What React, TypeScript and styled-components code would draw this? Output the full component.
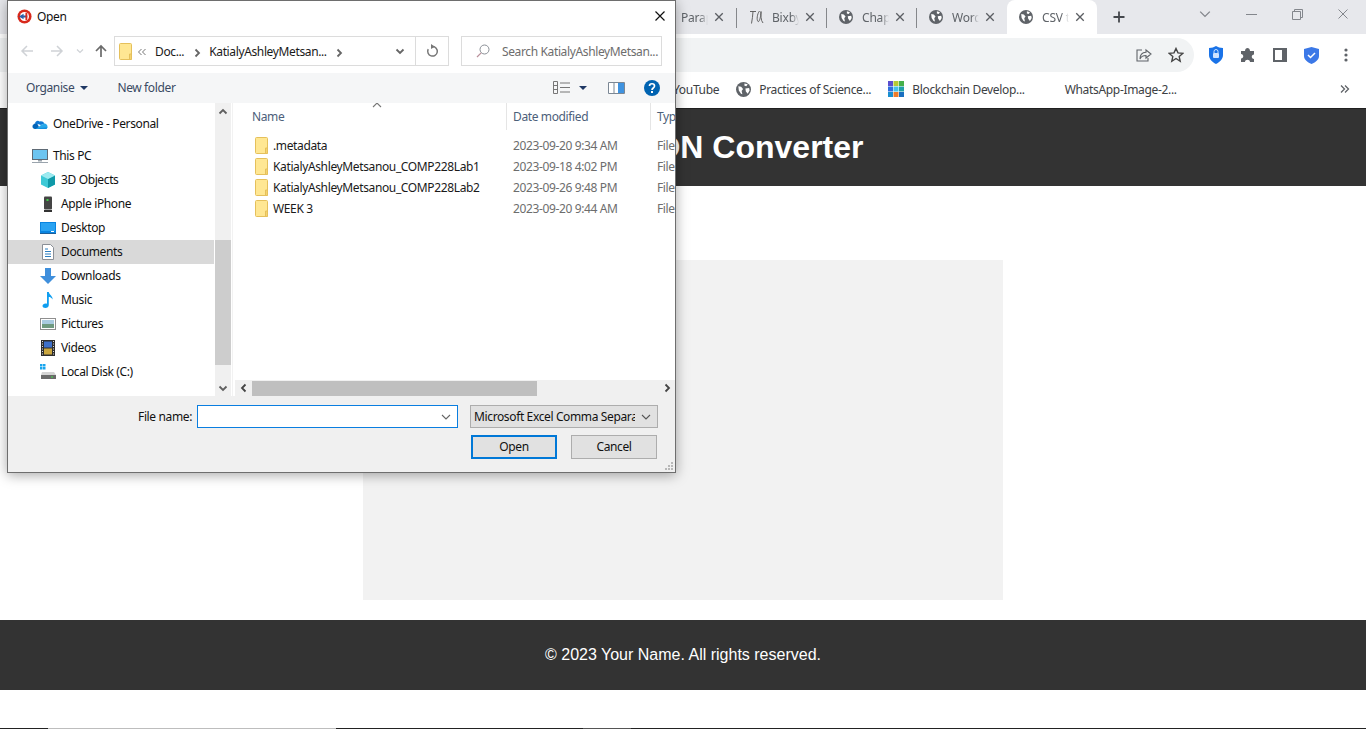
import React from "react";
import styled, { createGlobalStyle } from "styled-components";

const GlobalStyle = createGlobalStyle`
  html, body {
    margin: 0;
    padding: 0;
    height: 729px;
    overflow: hidden;
    background: #fff;
  }
  * { box-sizing: border-box; }
`;

const uiFont = `"Noto Sans", "Open Sans", sans-serif`;

const Page = styled.div`
  position: relative;
  width: 1366px;
  height: 729px;
  overflow: hidden;
  display: flex;
  flex-direction: column;
  font-family: "Liberation Sans", Arial, sans-serif;
`;

/* browser chrome */
const TabStrip = styled.div`
  height: 34px;
  flex: none;
  background: #e7e8ec;
  display: flex;
  align-items: center;
  padding-left: 647px;
  font: 12px ${uiFont};
  letter-spacing: -0.2px;
  color: #5f6368;
`;

const Tab = styled.div<{ $active?: boolean; $noIcon?: boolean }>`
  width: 90px;
  height: 34px;
  flex: none;
  display: flex;
  align-items: center;
  padding-left: ${(p) => (p.$noIcon ? "34px" : "12px")};
  position: relative;
  background: ${(p) => (p.$active ? "#fff" : "transparent")};
  border-radius: ${(p) => (p.$active ? "8px 8px 0 0" : "0")};
  &::after {
    content: "";
    display: ${(p) => (p.$active ? "none" : "block")};
    position: absolute;
    right: 0;
    top: 8px;
    height: 20px;
    width: 1px;
    background: #85878b;
  }
`;

const LastTab = styled(Tab)`
  &::after { display: none; }
`;

const TabLabel = styled.span<{ $gap?: number }>`
  width: 27px;
  margin-left: ${(p) => p.$gap ?? 9}px;
  overflow: hidden;
  white-space: nowrap;
  -webkit-mask-image: linear-gradient(to right, #000 70%, transparent);
  mask-image: linear-gradient(to right, #000 70%, transparent);
`;

const TabClose = styled.span`
  display: flex;
  margin-left: 6px;
  color: #5a5d62;
`;

const NewTab = styled.span`
  display: flex;
  margin-left: 15px;
  color: #45484d;
`;

const WindowControls = styled.div`
  margin-left: auto;
  display: flex;
  align-items: center;
  height: 28px;
  color: #83868c;
  margin-top: -6px;
`;

const WindowButton = styled.span`
  width: 46px;
  display: flex;
  justify-content: center;
`;

const Toolbar = styled.div`
  height: 38px;
  flex: none;
  background: #fff;
  display: flex;
  align-items: flex-end;
`;

const Omnibox = styled.div`
  width: 1194px;
  height: 34px;
  background: #f1f3f4;
  border-radius: 0 17px 17px 0;
  display: flex;
  align-items: center;
  justify-content: flex-end;
  gap: 16px;
  padding-right: 10px;
  color: #5f6368;
`;

const ToolIcons = styled.div`
  flex: 1;
  height: 34px;
  display: flex;
  align-items: center;
  padding-left: 13px;
  gap: 12px;
  color: #5f6368;
`;

const BookmarkBar = styled.div`
  height: 36px;
  flex: none;
  background: #fff;
  display: flex;
  align-items: center;
  font: 12px ${uiFont};
  letter-spacing: -0.33px;
  color: #3c4043;
  padding: 0 0 2px 673px;
`;

const Bookmark = styled.span<{ $gap: number }>`
  display: flex;
  align-items: center;
  gap: 8px;
  white-space: nowrap;
  margin-left: ${(p) => p.$gap}px;
`;

const More = styled.span`
  margin-left: auto;
  margin-right: 16px;
  display: flex;
  color: #5f6368;
`;

/* page content behind the dialog */
const SiteHeader = styled.header`
  height: 78px;
  flex: none;
  background: #333;
  border-top: 1px solid #202020;
  display: flex;
  align-items: center;
  justify-content: center;
  color: #fff;
`;

const SiteTitle = styled.h1`
  margin: 0;
  font-size: 32px;
  font-weight: 700;
`;

const Main = styled.main`
  height: 434px;
  flex: none;
  padding-top: 74px;
  background: #fff;
`;

const Panel = styled.section`
  width: 640px;
  height: 340px;
  margin: 0 auto;
  background: #f2f2f2;
`;

const SiteFooter = styled.footer`
  height: 70px;
  flex: none;
  background: #333;
  color: #fff;
  font-size: 16px;
  display: flex;
  align-items: center;
  justify-content: center;
`;

const Gap = styled.div`
  flex: 1;
  background: #fff;
`;

const BottomEdge = styled.div`
  height: 1px;
  flex: none;
  display: flex;
  background: #222;
`;

const EdgePiece = styled.div<{ $w: number; $c: string }>`
  width: ${(p) => p.$w}px;
  background: ${(p) => p.$c};
`;

/* file dialog */
const Dialog = styled.div`
  position: absolute;
  left: 7px;
  top: 0;
  width: 669px;
  height: 473px;
  background: #fff;
  border: 1px solid #6e6e6e;
  box-shadow: 0 2px 12px rgba(0, 0, 0, 0.35);
  display: flex;
  flex-direction: column;
  font: 12px ${uiFont};
  letter-spacing: -0.37px;
  color: #1a1a1a;
`;

const TitleBar = styled.div`
  height: 32px;
  flex: none;
  display: flex;
  align-items: center;
  padding: 0 9px 2px;
  gap: 5px;
  color: #111;
`;

const CloseX = styled.span`
  margin-left: auto;
  display: flex;
  color: #111;
`;

const AddressRow = styled.div`
  height: 40px;
  flex: none;
  display: flex;
  align-items: flex-start;
  padding-top: 3px;
`;

const NavButtons = styled.div`
  width: 106px;
  height: 30px;
  flex: none;
  display: flex;
  align-items: center;
  padding-left: 12px;
`;

const NavArrow = styled.span<{ $w: number }>`
  width: ${(p) => p.$w}px;
  flex: none;
  display: flex;
`;

const AddressBox = styled.div`
  width: 335px;
  height: 30px;
  flex: none;
  border: 1px solid #dcdcdc;
  display: flex;
  align-items: center;
  padding-left: 4px;
`;

const Crumb = styled.span<{ $gap: number }>`
  margin-left: ${(p) => p.$gap}px;
  display: flex;
  white-space: nowrap;
`;

const CrumbArrow = styled.span`
  display: flex;
  color: #666;
  margin-top: 4px;
`;

const AddressDrop = styled.span`
  margin-left: auto;
  width: 30px;
  height: 28px;
  display: flex;
  align-items: center;
  justify-content: center;
  color: #666;
`;

const Refresh = styled.span`
  width: 33px;
  height: 28px;
  border-left: 1px solid #dcdcdc;
  display: flex;
  align-items: center;
  justify-content: center;
  color: #777;
`;

const SearchBox = styled.div`
  width: 201px;
  height: 30px;
  margin-left: 12px;
  border: 1px solid #dcdcdc;
  display: flex;
  align-items: center;
  padding-left: 14px;
  gap: 12px;
  color: #6d6d6d;
  white-space: nowrap;
`;

const CommandBar = styled.div`
  height: 30px;
  flex: none;
  background: #f5f6f7;
  display: flex;
  align-items: center;
  padding: 0 0 1px 18px;
  color: #3a4a63;
`;

const Command = styled.span<{ $gap: number }>`
  margin-left: ${(p) => p.$gap}px;
  display: flex;
  align-items: center;
  gap: 6px;
`;

const CommandRight = styled.div`
  margin-left: auto;
  display: flex;
  align-items: center;
  padding-right: 15px;
`;

const ViewCaret = styled.span`
  display: flex;
  margin-left: 9px;
`;

const Body = styled.div`
  height: 293px;
  flex: none;
  display: flex;
  background: #fff;
`;

const NavPane = styled.div`
  width: 206px;
  flex: none;
  padding-top: 9px;
`;

const NavRow = styled.div<{ $depth: number; $selected?: boolean; $spaced?: boolean }>`
  height: 24px;
  display: flex;
  align-items: center;
  gap: 5px;
  padding-left: ${(p) => (p.$depth ? 32 : 24)}px;
  margin-top: ${(p) => (p.$spaced ? 8 : 0)}px;
  background: ${(p) => (p.$selected ? "#d9d9d9" : "transparent")};
  color: #111;
  white-space: nowrap;
`;

const NavText = styled.span`
  position: relative;
  top: -1px;
`;

const VScroll = styled.div`
  width: 16px;
  flex: none;
  margin-left: 1px;
  background: #f0f0f0;
  display: flex;
  flex-direction: column;
  color: #5f5f5f;
`;

const ScrollEnd = styled.span`
  height: 17px;
  display: flex;
  align-items: center;
  justify-content: center;
`;

const VTrack = styled.div`
  flex: 1;
  padding-top: 120px;
  padding-bottom: 14px;
`;

const VThumb = styled.div`
  height: 100%;
  background: #cdcdcd;
`;

const FilePane = styled.div`
  flex: 1;
  min-width: 0;
  margin-left: 1px;
  display: flex;
  flex-direction: column;
  overflow: hidden;
  border-left: 1px solid #f2f2f2;
`;

const ColumnHeader = styled.div`
  position: relative;
  height: 27px;
  flex: none;
  display: grid;
  grid-template-columns: 274px 144px 1fr;
  color: #4c607a;
  white-space: nowrap;
`;

const ColumnTitle = styled.div<{ $pad: number; $line?: boolean }>`
  padding-left: ${(p) => p.$pad}px;
  display: flex;
  align-items: center;
  border-right: ${(p) => (p.$line ? "1px solid #e5e5e5" : "none")};
`;

const SortCaret = styled.span`
  position: absolute;
  left: 139px;
  top: -3px;
  display: flex;
  color: #777;
`;

const FileList = styled.div`
  flex: 1;
  padding-top: 5px;
`;

const FileRow = styled.div`
  height: 21px;
  display: grid;
  grid-template-columns: 274px 144px 1fr;
  align-items: center;
  white-space: nowrap;
`;

const FileName = styled.div`
  display: flex;
  align-items: center;
  gap: 4px;
  padding-left: 22px;
  color: #1a1a1a;
`;

const FileMeta = styled.div`
  padding-left: 6px;
  color: #6d6d6d;
  overflow: hidden;
`;

const HScroll = styled.div`
  height: 16px;
  flex: none;
  margin-left: 2px;
  background: #f0f0f0;
  display: flex;
  align-items: center;
  color: #444;
`;

const HEnd = styled.span`
  width: 17px;
  height: 16px;
  display: flex;
  align-items: center;
  justify-content: center;
`;

const HTrack = styled.div`
  flex: 1;
  height: 15px;
`;

const HThumb = styled.div`
  width: 285px;
  height: 100%;
  background: #bfbfbf;
`;

const Footer = styled.div`
  flex: 1;
  background: #f0f0f0;
  position: relative;
  display: flex;
  flex-direction: column;
  padding-top: 9px;
  color: #111;
`;

const FieldRow = styled.div`
  display: flex;
  align-items: center;
  height: 23px;
`;

const FieldLabel = styled.label`
  width: 189px;
  text-align: right;
  padding-right: 5px;
`;

const NameInput = styled.div`
  width: 261px;
  height: 23px;
  background: #fff;
  border: 1px solid #0a7ee0;
  display: flex;
  align-items: center;
  justify-content: flex-end;
  padding-right: 6px;
  color: #666;
`;

const TypeSelect = styled.div`
  width: 188px;
  height: 23px;
  margin-left: 12px;
  background: #e1e1e1;
  border: 1px solid #adadad;
  display: flex;
  align-items: center;
  padding-left: 3px;
  white-space: nowrap;
  overflow: hidden;
`;

const TypeText = styled.span`
  width: 161px;
  flex: none;
  overflow: hidden;
`;

const TypeCaret = styled.span`
  display: flex;
  margin-left: 6px;
  color: #555;
`;

const ButtonRow = styled.div`
  display: flex;
  justify-content: flex-end;
  gap: 14px;
  padding-right: 18px;
  margin-top: 7px;
`;

const DialogButton = styled.button<{ $primary?: boolean }>`
  width: 86px;
  height: 24px;
  padding: 0 0 2px;
  font: inherit;
  letter-spacing: inherit;
  color: #111;
  background: #e1e1e1;
  border: ${(p) => (p.$primary ? "2px solid #0078d7" : "1px solid #adadad")};
`;

const Grip = styled.span`
  position: absolute;
  right: 1px;
  bottom: 1px;
  display: flex;
`;

/* drawings */
const Svg = ({ s = 16, children }: { s?: number; children: React.ReactNode }) => (
  <svg width={s} height={s} viewBox="0 0 16 16" fill="none" style={{ flex: "none" }}>
    {children}
  </svg>
);

const Cross = ({ s = 12, w = 1.6 }: { s?: number; w?: number }) => (
  <svg width={s} height={s} viewBox="0 0 12 12" style={{ flex: "none" }}>
    <path d="M1.5 1.5l9 9M10.5 1.5l-9 9" stroke="currentColor" strokeWidth={w} />
  </svg>
);

const Globe = ({ s = 14 }: { s?: number }) => (
  <svg width={s} height={s} viewBox="0 0 16 16" style={{ flex: "none" }}>
    <circle cx="8" cy="8" r="8" fill="#5f6368" />
    <path
      d="M2.5 4.5l3 .5 2 2.5-1.5 2 .8 3.5-1.5-.5L3 9zM9 1.5l3.5 1-1.5 2-2-.5zM10 7l4-.5.5 2.500-2 3.500L10.500 10z"
      fill="#fff"
    />
  </svg>
);

const Chevron = ({ up, s = 10 }: { up?: boolean; s?: number }) => (
  <svg width={s} height={s} viewBox="0 0 10 10" style={{ flex: "none" }}>
    <path d={up ? "M1 7l4-4 4 4" : "M1 3l4 4 4-4"} fill="none" stroke="currentColor" strokeWidth="1.1" />
  </svg>
);

const BoldChevron = ({ dir }: { dir: "up" | "down" | "left" | "right" }) => {
  const d = {
    up: "M1.500 6.500L5 3l3.500 3.500",
    down: "M1.500 3.500L5 7l3.500-3.500",
    left: "M6.500 1.500L3 5l3.500 3.500",
    right: "M3.500 1.500L7 5 3.500 8.500",
  }[dir];
  return (
    <svg width={10} height={10} viewBox="0 0 10 10" style={{ flex: "none" }}>
      <path d={d} fill="none" stroke="currentColor" strokeWidth="1.800" />
    </svg>
  );
};

const Folder = () => (
  <svg width={14} height={17} viewBox="0 0 14 17" style={{ flex: "none" }}>
    <rect x="0.500" y="0.500" width="12" height="16" rx="1" fill="#ffe793" stroke="#e5c05b" />
    <path d="M10.500 16.500V11h2v5.500z" fill="#f5d36f" stroke="#e5c05b" />
  </svg>
);

const Caret = () => (
  <svg width={8} height={4} viewBox="0 0 8 4" style={{ flex: "none" }}>
    <path d="M0 0h8L4 4z" fill="#1f3864" />
  </svg>
);

const Arrow = ({ color, flip }: { color: string; flip?: boolean }) => (
  <svg width={14} height={14} viewBox="0 0 14 14" style={{ flex: "none", transform: flip ? "scaleX(-1)" : undefined }}>
    <path d="M13 7H2M7 2L2 7l5 5" fill="none" stroke={color} strokeWidth="1.500" />
  </svg>
);

const OneDriveIcon = () => (
  <Svg>
    <path d="M5 7a3.500 3.500 0 0 0-3.500 1.500C0 9 0 13 3 13h5z" fill="#0364b8" />
    <path d="M3 7.200C3.500 5 6 4 7.500 5.500a4.500 4.500 0 0 1 5 2L9 9z" fill="#0f78d4" />
    <path d="M12 7.500c3-.3 5 3.500 2 5.500H4l5-4z" fill="#28a8ea" />
    <path d="M3 13h11c1-.5 1.300-1 1.600-1.800L8 12z" fill="#1490df" />
  </Svg>
);

const PcIcon = () => (
  <Svg>
    <rect x="0.500" y="1.500" width="15" height="10" fill="#6cc4f0" stroke="#5f6a75" />
    <path d="M6 12h4v1.500H6z" fill="#9aa4ad" />
    <path d="M0 14.500h16" stroke="#9aa4ad" />
  </Svg>
);

const ObjectsIcon = () => (
  <Svg>
    <path d="M8 0l7 3.500v9L8 16 1 12.500v-9z" fill="#3dc9d6" />
    <path d="M8 7l7-3.500v9L8 16z" fill="#0f99a8" />
    <path d="M8 7L1 3.500 8 0l7 3.500z" fill="#9ceaf0" />
  </Svg>
);

const PhoneIcon = () => (
  <Svg>
    <rect x="4" y="0.500" width="8" height="13" rx="1" fill="#444" />
    <rect x="6.500" y="3" width="2" height="2" fill="#3fd04a" />
    <path d="M4 15h8" stroke="#333" strokeWidth="2" />
  </Svg>
);

const DesktopIcon = () => (
  <Svg>
    <rect x="0" y="2" width="16" height="11" fill="#0a84e0" />
    <rect x="1" y="3" width="14" height="8" fill="#2aa3f2" />
    <path d="M11 11.500h3" stroke="#fff" />
    <path d="M0 13.500h16" stroke="#1d5f99" />
  </Svg>
);

const DocsIcon = () => (
  <Svg>
    <path d="M2.500 0.500h8l3 3v12h-11z" fill="#fff" stroke="#8a8f96" />
    <path d="M5 5h3M5 7.500h6M5 10h6M5 12.500h6" stroke="#2d7fc0" />
  </Svg>
);

const DownloadsIcon = () => (
  <Svg>
    <path d="M5 0h6v8h5l-8 8-8-8h5z" fill="#3f8fdc" />
  </Svg>
);

const MusicIcon = () => (
  <Svg>
    <path d="M7 0h1.800c.5 3 4.200 4 3.700 7.500C11.500 5.500 10 5 8.800 5v8c0 1.700-1.500 3-3.500 3-1.500 0-2.800-.8-2.800-2 0-1.500 1.500-2.500 3-2.500.6 0 1.100.1 1.500.3z" fill="#0f9ef0" />
  </Svg>
);

const PicturesIcon = () => (
  <Svg>
    <rect x="0.500" y="2.500" width="15" height="11" fill="#fff" stroke="#8f8f8f" />
    <rect x="2" y="4" width="12" height="4" fill="#a9cbe0" />
    <rect x="2" y="8" width="12" height="4" fill="#6f9a80" />
  </Svg>
);

const VideosIcon = () => (
  <Svg>
    <rect x="1" y="0" width="14" height="16" fill="#2d2d2d" />
    <rect x="4" y="1.500" width="8" height="6" fill="#3e70c9" />
    <rect x="4" y="8.500" width="8" height="6" fill="#c9a53e" />
    <path d="M2.500 1v14M13.500 1v14" stroke="#ddd" strokeDasharray="1 1.500" />
  </Svg>
);

const DiskIcon = () => (
  <Svg>
    <path d="M0 0h2.500v2.500H0zM3 0h2.500v2.500H3zM0 3h2.500v2.500H0zM3 3h2.500v2.500H3z" fill="#18a5ee" />
    <path d="M2 8h12l2 3v4H1v-4z" fill="#d4d4d4" />
    <rect x="1" y="11" width="15" height="4" fill="#6a6a6a" />
    <rect x="11" y="12.500" width="2" height="1" fill="#45e04a" />
  </Svg>
);

const navItems: { label: string; depth: number; icon: React.ReactNode; spaced?: boolean; selected?: boolean }[] = [
  { label: "OneDrive - Personal", depth: 0, icon: <OneDriveIcon /> },
  { label: "This PC", depth: 0, icon: <PcIcon />, spaced: true },
  { label: "3D Objects", depth: 1, icon: <ObjectsIcon /> },
  { label: "Apple iPhone", depth: 1, icon: <PhoneIcon /> },
  { label: "Desktop", depth: 1, icon: <DesktopIcon /> },
  { label: "Documents", depth: 1, icon: <DocsIcon />, selected: true },
  { label: "Downloads", depth: 1, icon: <DownloadsIcon /> },
  { label: "Music", depth: 1, icon: <MusicIcon /> },
  { label: "Pictures", depth: 1, icon: <PicturesIcon /> },
  { label: "Videos", depth: 1, icon: <VideosIcon /> },
  { label: "Local Disk (C:)", depth: 1, icon: <DiskIcon /> },
];

const files = [
  { name: ".metadata", date: "2023-09-20 9:34 AM" },
  { name: "KatialyAshleyMetsanou_COMP228Lab1", date: "2023-09-18 4:02 PM" },
  { name: "KatialyAshleyMetsanou_COMP228Lab2", date: "2023-09-26 9:48 PM" },
  { name: "WEEK 3", date: "2023-09-20 9:44 AM" },
];

const Tabs = () => (
  <TabStrip>
    <Tab $noIcon>
      <TabLabel $gap={0}>Paraphrase</TabLabel>
      <TabClose><Cross s={10} /></TabClose>
    </Tab>
    <Tab>
      <svg width={16} height={16} viewBox="0 0 16 16" style={{ flex: "none", marginTop: -1 }}>
        <path d="M1 2.500h6M4 2.500c0 4-1 8-1.500 12M10.500 2c-2.500 3-3 9-1.500 10.500 1.500 1 3-6 3-10 0 3-.5 9 2 11.500" fill="none" stroke="#555" strokeWidth="0.900" />
      </svg>
      <TabLabel $gap={7}>Bixby</TabLabel>
      <TabClose><Cross s={10} /></TabClose>
    </Tab>
    <Tab>
      <Globe />
      <TabLabel>Chapter</TabLabel>
      <TabClose><Cross s={10} /></TabClose>
    </Tab>
    <LastTab>
      <Globe />
      <TabLabel>Word</TabLabel>
      <TabClose><Cross s={10} /></TabClose>
    </LastTab>
    <Tab $active>
      <Globe />
      <TabLabel>CSV to</TabLabel>
      <TabClose><Cross s={10} /></TabClose>
    </Tab>
    <NewTab>
      <svg width={14} height={14} viewBox="0 0 14 14">
        <path d="M7 1.500v11M1.500 7h11" stroke="currentColor" strokeWidth="1.800" />
      </svg>
    </NewTab>
    <WindowControls>
      <WindowButton><Chevron s={12} /></WindowButton>
      <WindowButton>
        <svg width={11} height={11} viewBox="0 0 11 11"><path d="M0 5.500h11" stroke="currentColor" /></svg>
      </WindowButton>
      <WindowButton>
        <svg width={11} height={11} viewBox="0 0 11 11">
          <path d="M0.500 2.500h8v8h-8zM2.500 2.500v-2h8v8h-2" fill="none" stroke="currentColor" />
        </svg>
      </WindowButton>
      <WindowButton><Cross s={12} w={1} /></WindowButton>
    </WindowControls>
  </TabStrip>
);

const BrowserToolbar = () => (
  <Toolbar>
    <Omnibox>
      <Svg>
        <path d="M10 3l5 4-5 4V8.500C7 8.500 5 9.500 4 12c0-4 2-6.500 6-6.700zM6 3H1v11h11v-3" stroke="currentColor" fill="none" strokeWidth="1.100" />
      </Svg>
      <Svg>
        <path d="M8 1.500l2 4.400 4.800.5-3.600 3.200 1 4.700L8 11.500l-4.200 2.800 1-4.700L1.200 6.400 6 5.900z" stroke="#444" strokeWidth="1.400" fill="none" />
      </Svg>
    </Omnibox>
    <ToolIcons>
      <svg width={16} height={18} viewBox="0 0 16 18" style={{ flex: "none", marginLeft: 1 }}>
        <path d="M1 2c3 0 5-1 7-2 2 1 4 2 7 2v7c0 4-3 7-7 9-4-2-7-5-7-9z" fill="#1a73e8" />
        <rect x="5" y="7" width="6" height="5" rx="1" fill="#cfe3ff" />
        <path d="M6 7V5.500a2 2 0 0 1 4 0V7" fill="none" stroke="#cfe3ff" />
      </svg>
      <svg width={16} height={16} viewBox="0 0 16 16" style={{ flex: "none", marginLeft: 4 }}>
        <path d="M1 4h4c0-4 5-4 5 0h4v3.500c-3 0-3 4.500 0 4.500v3H10c0-3-5-3-5 0H1v-3.500c3 0 3-4.500 0-4.500z" fill="#5f6368" />
      </svg>
      <svg width={14} height={14} viewBox="0 0 14 14" style={{ flex: "none", marginLeft: 5 }}>
        <path d="M0 0h14v14H0zM2 2v10h7V2z" fill="#5f6368" fillRule="evenodd" />
      </svg>
      <svg width={15} height={17} viewBox="0 0 15 17" style={{ flex: "none", marginLeft: 5 }}>
        <path d="M0 2l7.500-2L15 2v7c0 3.500-3 6-7.500 8C3 15 0 12.500 0 9z" fill="#3b78e7" />
        <path d="M4 8l2.500 2.500L11 6" fill="none" stroke="#fff" strokeWidth="1.500" />
      </svg>
      <svg width={4} height={14} viewBox="0 0 4 14" style={{ flex: "none", marginLeft: 13 }}>
        <circle cx="2" cy="2" r="1.600" fill="#5f6368" />
        <circle cx="2" cy="7" r="1.600" fill="#5f6368" />
        <circle cx="2" cy="12" r="1.600" fill="#5f6368" />
      </svg>
    </ToolIcons>
  </Toolbar>
);

const Bookmarks = () => (
  <BookmarkBar>
    <Bookmark $gap={0}>YouTube</Bookmark>
    <Bookmark $gap={17}>
      <Globe s={15} />
      Practices of Science...
    </Bookmark>
    <Bookmark $gap={17}>
      <svg width={16} height={16} viewBox="0 0 16 16" style={{ flex: "none" }}>
        <path d="M0 0h5v5H0z" fill="#5a4fcf" />
        <path d="M5.500 0h5v5h-5z" fill="#b7c934" />
        <path d="M11 0h5v5h-5z" fill="#46b04a" />
        <path d="M0 5.500h5v5H0z" fill="#2f6fde" />
        <path d="M5.500 5.500h5v5h-5z" fill="#46c1e8" />
        <path d="M11 5.500h5v5h-5z" fill="#20a0a8" />
        <path d="M0 11h5v5H0z" fill="#1a8fd0" />
        <path d="M5.500 11h5v5h-5z" fill="#ef7c2a" />
        <path d="M11 11h5v5h-5z" fill="#1a6fc0" />
      </svg>
      Blockchain Develop...
    </Bookmark>
    <Bookmark $gap={40}>WhatsApp-Image-2...</Bookmark>
    <More>
      <svg width={10} height={10} viewBox="0 0 10 10">
        <path d="M1 1.500L4.500 5 1 8.500M5 1.500L8.500 5 5 8.500" fill="none" stroke="currentColor" strokeWidth="1.300" />
      </svg>
    </More>
  </BookmarkBar>
);

const FileDialog = () => (
  <Dialog>
    <TitleBar>
      <svg width={15} height={15} viewBox="0 0 16 16" style={{ flex: "none" }}>
        <circle cx="8" cy="8" r="7.500" fill="#d8291c" />
        <circle cx="8" cy="8" r="4.800" fill="#fff" />
        <path d="M2 8l5-3v2h4v2H7v2z" fill="#2b5fa8" />
        <path d="M9 4h2v8H9z" fill="#d8291c" />
      </svg>
      Open
      <CloseX><Cross s={12} w={1.2} /></CloseX>
    </TitleBar>
    <AddressRow>
      <NavButtons>
        <NavArrow $w={30}><Arrow color="#cfd2d6" /></NavArrow>
        <NavArrow $w={26}><Arrow color="#cfd2d6" flip /></NavArrow>
        <NavArrow $w={18}>
          <svg width={8} height={8} viewBox="0 0 8 8" style={{ color: "#cfd2d6" }}>
            <path d="M1 2.500l3 3 3-3" fill="none" stroke="currentColor" strokeWidth="1.200" />
          </svg>
        </NavArrow>
        <NavArrow $w={14}>
          <svg width={14} height={14} viewBox="0 0 14 14" style={{ flex: "none" }}>
            <path d="M7 13V2M2 7l5-5 5 5" fill="none" stroke="#6b6b6b" strokeWidth="1.700" />
          </svg>
        </NavArrow>
      </NavButtons>
      <AddressBox>
        <Folder />
        <Crumb $gap={4}>
          <svg width={10} height={10} viewBox="0 0 10 10" style={{ color: "#777", marginTop: 2 }}>
            <path d="M4.500 2L1.500 5l3 3M8.500 2l-3 3 3 3" fill="none" stroke="currentColor" />
          </svg>
        </Crumb>
        <Crumb $gap={8}>Doc...</Crumb>
        <Crumb $gap={8}><CrumbArrow><BoldChevron dir="right" /></CrumbArrow></Crumb>
        <Crumb $gap={7}>KatialyAshleyMetsan...</Crumb>
        <Crumb $gap={7}><CrumbArrow><BoldChevron dir="right" /></CrumbArrow></Crumb>
        <AddressDrop><BoldChevron dir="down" /></AddressDrop>
        <Refresh>
          <svg width={14} height={14} viewBox="0 0 14 14" style={{ flex: "none" }}>
            <path d="M7.500 2.500a4.800 4.800 0 1 1-4.300 2.700" fill="none" stroke="currentColor" strokeWidth="1.500" />
            <path d="M6 0l4 2.700L6 5z" fill="currentColor" />
          </svg>
        </Refresh>
      </AddressBox>
      <SearchBox>
        <svg width={14} height={14} viewBox="0 0 14 14" style={{ flex: "none" }}>
          <circle cx="8.500" cy="5.500" r="4.500" fill="none" stroke="#8a8f96" />
          <path d="M5.200 8.800L1 13" stroke="#b98f9a" strokeWidth="1.200" />
        </svg>
        Search KatialyAshleyMetsan...
      </SearchBox>
    </AddressRow>
    <CommandBar>
      <Command $gap={0}>Organise <Caret /></Command>
      <Command $gap={29}>New folder</Command>
      <CommandRight>
        <svg width={17} height={13} viewBox="0 0 17 13" style={{ flex: "none" }}>
          <path d="M0.500 0.500h4v12h-4zM0.500 4.500h4M0.500 8.500h4M7 2h10M7 6.500h10M7 11h10" fill="none" stroke="#777" />
        </svg>
        <ViewCaret><Caret /></ViewCaret>
        <svg width={17} height={12} viewBox="0 0 17 12" style={{ flex: "none", marginLeft: 21 }}>
          <path d="M0.500 0.500h16v11H0.500z" fill="#fff" stroke="#7b8794" />
          <path d="M10 1h6v10h-6z" fill="#3f93e0" />
          <path d="M6 1v10" stroke="#7b8794" />
        </svg>
        <svg width={16} height={16} viewBox="0 0 16 16" style={{ flex: "none", marginLeft: 19 }}>
          <circle cx="8" cy="8" r="8" fill="#0063b1" />
          <path d="M5.500 6c0-3 5-3 5 0 0 2-2.500 2-2.500 4" fill="none" stroke="#fff" strokeWidth="1.700" />
          <rect x="7" y="11" width="2" height="2" fill="#fff" />
        </svg>
      </CommandRight>
    </CommandBar>
    <Body>
      <NavPane>
        {navItems.map((item) => (
          <NavRow key={item.label} $depth={item.depth} $selected={item.selected} $spaced={item.spaced}>
            {item.icon}
            <NavText>{item.label}</NavText>
          </NavRow>
        ))}
      </NavPane>
      <VScroll>
        <ScrollEnd><BoldChevron dir="up" /></ScrollEnd>
        <VTrack><VThumb /></VTrack>
        <ScrollEnd><BoldChevron dir="down" /></ScrollEnd>
      </VScroll>
      <FilePane>
        <ColumnHeader>
          <SortCaret><Chevron up /></SortCaret>
          <ColumnTitle $pad={19} $line>Name</ColumnTitle>
          <ColumnTitle $pad={6} $line>Date modified</ColumnTitle>
          <ColumnTitle $pad={6}>Type</ColumnTitle>
        </ColumnHeader>
        <FileList>
          {files.map((f) => (
            <FileRow key={f.name}>
              <FileName><Folder />{f.name}</FileName>
              <FileMeta>{f.date}</FileMeta>
              <FileMeta>File folder</FileMeta>
            </FileRow>
          ))}
        </FileList>
        <HScroll>
          <HEnd><BoldChevron dir="left" /></HEnd>
          <HTrack><HThumb /></HTrack>
          <HEnd><BoldChevron dir="right" /></HEnd>
        </HScroll>
      </FilePane>
    </Body>
    <Footer>
      <FieldRow>
        <FieldLabel>File name:</FieldLabel>
        <NameInput><Chevron /></NameInput>
        <TypeSelect>
          <TypeText>Microsoft Excel Comma Separated Values File</TypeText>
          <TypeCaret><Chevron /></TypeCaret>
        </TypeSelect>
      </FieldRow>
      <ButtonRow>
        <DialogButton $primary>Open</DialogButton>
        <DialogButton>Cancel</DialogButton>
      </ButtonRow>
      <Grip>
        <svg width={10} height={10} viewBox="0 0 10 10">
          <path d="M7 1h2v2H7zM4 4h2v2H4zM7 4h2v2H7zM1 7h2v2H1zM4 7h2v2H4zM7 7h2v2H7z" fill="#b8b8b8" />
        </svg>
      </Grip>
    </Footer>
  </Dialog>
);

const App = () => (
  <Page>
    <GlobalStyle />
    <Tabs />
    <BrowserToolbar />
    <Bookmarks />
    <SiteHeader>
      <SiteTitle>CSV to JSON Converter</SiteTitle>
    </SiteHeader>
    <Main>
      <Panel />
    </Main>
    <SiteFooter>© 2023 Your Name. All rights reserved.</SiteFooter>
    <Gap />
    <BottomEdge>
      <EdgePiece $w={48} $c="#222" />
      <EdgePiece $w={288} $c="#bdbdbd" />
      <EdgePiece $w={247} $c="#222" />
      <EdgePiece $w={48} $c="#555" />
    </BottomEdge>
    <FileDialog />
  </Page>
);

export default App;
